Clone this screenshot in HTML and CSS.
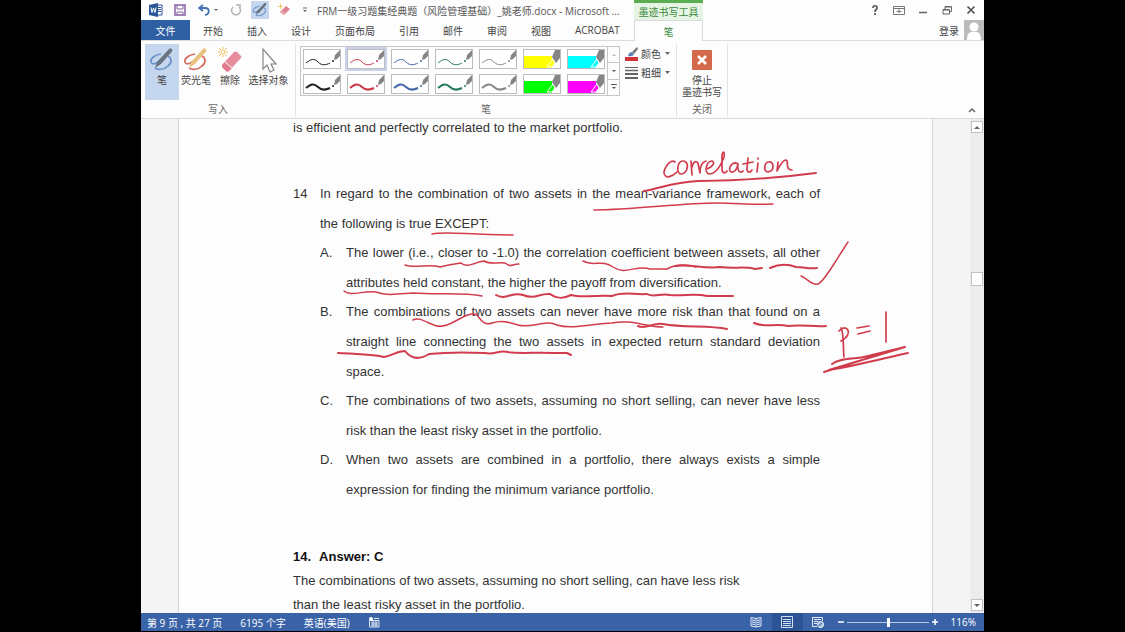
FILE: index.html
```html
<!DOCTYPE html>
<html lang="zh-CN">
<head>
<meta charset="utf-8">
<title>FRM一级习题集经典题（风险管理基础）_姚老师.docx - Microsoft Word</title>
<link rel="stylesheet" href="styles.css">
</head>
<body>
<svg class="defs" aria-hidden="true">
  <symbol id="stroke-sample" viewBox="0 0 36 18">
    <path d="M2 13C7 9 10 8 14 12C18 16 22 15 26 13" fill="none" stroke="currentColor"/>
    <circle cx="29" cy="11" r="1" fill="currentColor"/>
    <path d="M30 10L31 5L36 0V6L33 9Z" fill="#858585"/>
  </symbol>
  <symbol id="marker-sample" viewBox="0 0 36 18">
    <path d="M0 6H28V18H0Z" fill="currentColor"/>
    <path d="M23 17L29 9L31 13L28 17Z" fill="currentColor" stroke="#fff"/>
    <path d="M28 7L31 0H36V8L32 13Z" fill="#858585"/>
  </symbol>
  <symbol id="pen-loop" viewBox="0 0 26 26">
    <path d="M12 7C5 8 1 12 2 15C3 18 7 17 10 14M19 9C23 11 23 16 19 19C15 23 9 23 6 21" fill="none" stroke="currentColor" stroke-width="1.700"/>
    <path class="pen-body" d="M6 21L8 15L20 2Q23 0 23.500 4L12 17Z"/>
  </symbol>
</svg>
<main class="app">
  <header class="head">
    <div class="titlebar">
      <button class="qat" aria-label="Word"><svg width="14" height="14" viewBox="0 0 14 14"><path d="M8 2H13V12H8" fill="#fff" stroke="#2b579a"/><path d="M9 4.500H12M9 6.500H12M9 8.500H12" stroke="#2b579a"/><path d="M0 2L9 0V14L0 12Z" fill="#2b579a"/><path d="M2 4.500L3 9.500L4.500 5L6 9.500L7 4.500" fill="none" stroke="#fff"/></svg></button>
      <button class="qat" aria-label="保存"><svg width="12" height="12" viewBox="0 0 12 12"><path d="M1 1H11V11H1Z" fill="#fff" stroke="#8661a5" stroke-width="1.500"/><path d="M3 1V5H9V1M3 11V8H9V11" fill="none" stroke="#8661a5"/></svg></button>
      <button class="qat undo" aria-label="撤销"><svg width="20" height="12" viewBox="0 0 20 12"><path d="M5 1L1 4L5 7M1 4H7C12 4 12 10 7 11" fill="none" stroke="#4272b0" stroke-width="1.800"/><path d="M16 5H20L18 7Z" fill="#666"/></svg></button>
      <button class="qat" aria-label="重复"><svg width="12" height="12" viewBox="0 0 12 12"><path d="M3 3A4.500 4.500 0 1 0 9 3M6 1H10V5" fill="none" stroke="#b3b3b3" stroke-width="1.500"/></svg></button>
      <button class="qat pen selected" aria-label="笔"><svg width="16" height="16"><use href="#pen-loop"/></svg></button>
      <button class="qat" aria-label="橡皮擦"><svg width="12" height="12" viewBox="0 0 12 12"><path d="M2 8L8 2L12 5L6 11Z" fill="#e0808e"/><path d="M2 8L4 6L8 9L6 11Z" fill="#e8a2ac"/><path d="M2.500 0V5M0 2.500H5" stroke="#edc66e"/></svg></button>
      <button class="qat more" aria-label="自定义快速访问工具栏"><svg width="6" height="6" viewBox="0 0 6 6"><path d="M1 1H5" stroke="#666"/><path d="M1 3H5L3 5Z" fill="#666"/></svg></button>
      <h1 class="doc-title">FRM一级习题集经典题（风险管理基础）_姚老师.docx - Microsoft ...</h1>
    </div>
    <div class="context-title">墨迹书写工具</div>
    <div class="window-tools">
      <button aria-label="帮助"><svg width="12" height="12" viewBox="0 0 12 12"><path d="M4 4C4 1 8 1 8 4C8 6 6 5 6 8M6 9V11" fill="none" stroke="#555" stroke-width="1.700"/></svg></button>
      <button aria-label="功能区显示选项"><svg width="12" height="12" viewBox="0 0 12 12"><path d="M.5 2.500H11.500V10.500H.5ZM.5 4.500H11.500M3.500 7.500H8.500M6 5V9" fill="none" stroke="#777"/></svg></button>
      <button aria-label="最小化"><svg width="12" height="12" viewBox="0 0 12 12"><path d="M2 8.500H10" stroke="#666" stroke-width="1.500"/></svg></button>
      <button aria-label="还原"><svg width="12" height="12" viewBox="0 0 12 12"><path d="M2 5.500H8.500V10H2ZM4 5V2.500H10.500V7.500H9M4 3H10M2 6H8" fill="none" stroke="#666"/></svg></button>
      <button aria-label="关闭"><svg width="12" height="12" viewBox="0 0 12 12"><path d="M2.500 2.500L9.500 9.500M9.500 2.500L2.500 9.500" stroke="#555" stroke-width="1.700"/></svg></button>
    </div>
    <nav class="tabs">
      <button class="file">文件</button><button>开始</button><button>插入</button><button>设计</button><button>页面布局</button><button>引用</button><button>邮件</button><button>审阅</button><button>视图</button><button>ACROBAT</button>
    </nav>
    <button class="context-tab">笔</button>
    <div class="account">
      <button>登录</button>
      <svg width="20" height="20" viewBox="0 0 20 20"><path d="M0 0H20V20H0Z" fill="#bcbcbc"/><circle cx="10" cy="7" r="4.500" fill="#fff"/><path d="M3 20C3 14 5 12 8 12H12C15 12 17 14 17 20Z" fill="#fff"/></svg>
    </div>
  </header>

  <section class="ribbon" aria-label="笔">
    <div class="group write">
      <div class="tools">
        <button class="tool selected"><svg class="pen" width="26" height="26"><use href="#pen-loop"/></svg>笔</button>
        <button class="tool"><svg class="highlighter" width="26" height="26"><use href="#pen-loop"/></svg>荧光笔</button>
        <button class="tool"><svg width="26" height="26" viewBox="0 0 26 26"><path d="M5 18L17 5Q19 4 20 5L24 9Q25 10 24 11L12 24Q11 25 9 24L5 20Z" fill="#e58c9d"/><path d="M5 18L8 15L15 21L12 24Q10 25 9 24L5 20Z" fill="#df7b8d"/><path d="M8 15L15 21" stroke="#fff"/><circle cx="6" cy="5" r="2" fill="none" stroke="#edc45c"/><path d="M6 0V2M6 8V10M1 5H3M9 5H11M2 1L4 3M8 7L10 9M10 1L8 3M4 7L2 9" stroke="#edc45c"/></svg>擦除</button>
        <button class="tool wide"><svg width="26" height="26" viewBox="0 0 26 26"><path d="M7 2V22L11 18L14 25L18 23L15 17H20Z" fill="#fff" stroke="#858585" stroke-width="1.200"/></svg>选择对象</button>
      </div>
      <div class="group-label">写入</div>
    </div>
    <div class="group pens">
      <div class="tools">
        <div class="gallery">
          <div class="swatches">
            <button class="ink black" aria-label="黑色细笔"><svg><use href="#stroke-sample"/></svg></button>
            <button class="ink red chosen" aria-label="红色细笔"><svg><use href="#stroke-sample"/></svg></button>
            <button class="ink blue" aria-label="蓝色细笔"><svg><use href="#stroke-sample"/></svg></button>
            <button class="ink teal" aria-label="绿色细笔"><svg><use href="#stroke-sample"/></svg></button>
            <button class="ink gray" aria-label="灰色细笔"><svg><use href="#stroke-sample"/></svg></button>
            <button class="ink yellow" aria-label="黄色荧光笔"><svg><use href="#marker-sample"/></svg></button>
            <button class="ink cyan" aria-label="青色荧光笔"><svg><use href="#marker-sample"/></svg></button>
            <button class="ink black bold" aria-label="黑色粗笔"><svg><use href="#stroke-sample"/></svg></button>
            <button class="ink red bold" aria-label="红色粗笔"><svg><use href="#stroke-sample"/></svg></button>
            <button class="ink blue bold" aria-label="蓝色粗笔"><svg><use href="#stroke-sample"/></svg></button>
            <button class="ink teal bold" aria-label="绿色粗笔"><svg><use href="#stroke-sample"/></svg></button>
            <button class="ink gray bold" aria-label="灰色粗笔"><svg><use href="#stroke-sample"/></svg></button>
            <button class="ink green" aria-label="绿色荧光笔"><svg><use href="#marker-sample"/></svg></button>
            <button class="ink magenta" aria-label="洋红荧光笔"><svg><use href="#marker-sample"/></svg></button>
          </div>
          <div class="gallery-nav">
            <button aria-label="上一行"><svg width="6" height="6" viewBox="0 0 6 6"><path d="M1 4H5L3 2Z" fill="#bbb"/></svg></button>
            <button aria-label="下一行"><svg width="6" height="6" viewBox="0 0 6 6"><path d="M1 2H5L3 4Z" fill="#555"/></svg></button>
            <button aria-label="其他"><svg width="6" height="6" viewBox="0 0 6 6"><path d="M0 .5H6" stroke="#555"/><path d="M1 3H5L3 5Z" fill="#555"/></svg></button>
          </div>
        </div>
        <div class="options">
          <button><svg width="14" height="14" viewBox="0 0 14 14"><path d="M0 10H13V14H0Z" fill="#d13438"/><path d="M3 9Q4 5 7 5L9 7Q8 10 3 9Z" fill="#5b7fbd"/><path d="M7 5L12 0L13 2L9 7Z" fill="#777"/></svg>颜色<span class="caret"></span></button>
          <button><svg width="14" height="14" viewBox="0 0 14 14"><path d="M0 1.500H13" stroke="#666"/><path d="M0 4.500H13" stroke="#666" stroke-width="1.500"/><path d="M0 8H13M0 12H13" stroke="#666" stroke-width="2"/></svg>粗细<span class="caret"></span></button>
        </div>
      </div>
      <div class="group-label">笔</div>
    </div>
    <div class="group stop">
      <div class="tools">
        <button class="tool"><svg width="20" height="26" viewBox="0 0 20 26"><rect y="3" width="20" height="20" rx="1" fill="#d4694c"/><path d="M6 9L14 17M14 9L6 17" stroke="#fff" stroke-width="2.500"/></svg>停止<br>墨迹书写</button>
      </div>
      <div class="group-label">关闭</div>
    </div>
    <button class="collapse" aria-label="折叠功能区"><svg width="8" height="6" viewBox="0 0 8 6"><path d="M1 5L4 2L7 5" fill="none" stroke="#666" stroke-width="1.500"/></svg></button>
  </section>

  <section class="workspace">
    <div class="canvas">
      <article class="page">
        <p class="lead">is efficient and perfectly correlated to the market portfolio.</p>
        <div class="question">
          <span>14</span>
          <p><span class="full">In regard to the combination of two assets in the mean-variance framework, each of</span><span class="line">the following is true EXCEPT:</span></p>
        </div>
        <div class="choice"><span>A.</span>
          <p><span class="full">The lower (i.e., closer to -1.0) the correlation coefficient between assets, all other</span><span class="line">attributes held constant, the higher the payoff from diversification.</span></p></div>
        <div class="choice"><span>B.</span>
          <p><span class="full">The combinations of two assets can never have more risk than that found on a</span><span class="full">straight line connecting the two assets in expected return standard deviation</span><span class="line">space.</span></p></div>
        <div class="choice"><span>C.</span>
          <p><span class="full">The combinations of two assets, assuming no short selling, can never have less</span><span class="line">risk than the least risky asset in the portfolio.</span></p></div>
        <div class="choice"><span>D.</span>
          <p><span class="full">When two assets are combined in a portfolio, there always exists a simple</span><span class="line">expression for finding the minimum variance portfolio.</span></p></div>
        <div class="answer">
          <h2><span>14.</span><span>Answer: C</span></h2>
          <p>The combinations of two assets, assuming no short selling, can have less risk<br>than the least risky asset in the portfolio.</p>
        </div>
        <svg class="annotations" width="753" height="495" viewBox="179 118 753 495" role="img" aria-label="correlation, p = 1">
          <g class="hand">
            <path d="M675 161C670 157 664 168 664 172C665 179 673 175 677 171"/>
            <path d="M683 160C677 160 676 173 681 173C688 173 690 160 683 160"/>
            <path d="M691 160L692 174M692 166C693 161 696 159 698 162L700 172C700 165 702 161 706 160"/>
            <path d="M706 168C712 167 716 161 712 160C706 160 704 172 709 173C716 173 721 164 724 156C725 150 723 150 722 154L722 168C722 172 725 173 727 170"/>
            <path d="M738 163C732 159 727 169 731 171C735 172 738 166 738 163C737 169 739 173 743 170"/>
            <path d="M748 157L747 168C747 172 750 172 752 169M743 163L753 161M758 162L757 171M758 157V158"/>
            <path d="M769 161C764 161 763 171 768 171C775 170 774 160 769 161M778 161L777 170C780 163 785 157 787 160C788 163 786 169 792 169"/>
            <path d="M841 327C844 332 843 348 844 356M839 330C846 321 855 333 841 340M857 327L869 325M858 333L870 330M886 311V341"/>
          </g>
          <g class="thin">
            <path d="M594 209C635 209 680 202 717 202C738 202 752 204 773 203"/>
            <path d="M432 233C448 230 467 234 513 234"/>
            <path d="M405 264C415 268 430 262 440 266C448 264 454 263 461 262C467 268 478 260 484 260C491 264 497 261 505 262C512 267 511 263 519 263"/>
            <path d="M344 290C351 296 364 289 376 291C387 295 398 293 413 292C438 294 463 291 482 295"/>
            <path d="M413 319C421 314 434 328 442 325C453 325 467 309 477 314C481 319 484 325 492 322C502 319 508 321 518 324C532 328 545 318 557 324C572 329 596 322 612 322C631 318 646 326 663 326"/>
            <path d="M583 260C594 266 602 258 613 266C626 275 636 263 650 268H667C674 264 682 262 696 266"/>
            <path d="M801 275C807 277 812 285 818 283C824 281 836 259 848 241"/>
          </g>
          <g class="thick">
            <path d="M644 190C659 188 672 181 698 180C739 180 777 177 816 172"/>
            <path d="M675 265C691 263 704 268 720 266C735 268 744 265 755 268L762 267M770 267C779 263 788 263 796 266C805 266 808 268 817 267"/>
            <path d="M496 294C506 300 512 290 523 294C535 299 539 292 550 293C557 298 563 298 571 294C582 297 590 294 612 295C624 290 633 294 647 293C654 297 660 292 670 294C684 295 696 292 707 295H733"/>
            <path d="M638 325C646 329 653 321 663 323C685 327 708 324 727 328M754 322C764 327 776 322 788 325C800 323 813 326 826 325"/>
            <path d="M338 352C356 353 371 353 384 356C393 354 398 350 405 350C412 359 421 358 429 353C447 351 463 351 485 352C495 354 498 349 508 351C521 353 535 351 553 352H567L571 354"/>
            <path d="M832 363C841 356 854 359 868 355L905 346L829 369C860 364 889 356 908 352M824 371L881 353"/>
          </g>
        </svg>
      </article>
    </div>
    <div class="scrollbar">
      <button aria-label="向上滚动"><svg width="6" height="6" viewBox="0 0 6 6"><path d="M0 5H6L3 2Z" fill="#666"/></svg></button>
      <span class="thumb"></span>
      <button aria-label="向下滚动"><svg width="6" height="6" viewBox="0 0 6 6"><path d="M0 2H6L3 5Z" fill="#666"/></svg></button>
    </div>
  </section>

  <footer class="status">
    <span>第 9 页 , 共 27 页</span><span>6195 个字</span><span>英语(美国)</span>
    <svg class="macro" width="12" height="12" viewBox="0 0 12 12"><path d="M1.500 4.500H11V11H1.500ZM6 2.500H11M3 7H10M3 9H10M5 5V11M8 5V11" fill="none" stroke="#dce6f4"/><circle cx="3" cy="3" r="2" fill="#fff"/></svg>
    <div class="views">
      <button aria-label="阅读视图"><svg width="12" height="12" viewBox="0 0 12 12"><path d="M6 2.500L1 1.500V10L6 11L11 10V1.500L6 2.500V11M2 4L5 4.500M2 6L5 6.500M2 8L5 8.500M7 4.500L10 4M7 6.500L10 6M7 8.500L10 8" fill="none" stroke="#e5edf8"/></svg></button>
      <button class="current" aria-label="页面视图"><svg width="12" height="12" viewBox="0 0 12 12"><path d="M.5 .5H11.500V11.500H.5ZM2 3.500H10M2 5.500H10M2 7.500H10M2 9.500H10" fill="none" stroke="#d3e0f2"/></svg></button>
      <button aria-label="Web 版式视图"><svg width="12" height="12" viewBox="0 0 12 12"><path d="M5 10.500H.5V1.500H10.500V5M2 3.500H9M2 5.500H6M2 7.500H5" fill="none" stroke="#e5edf8"/><circle cx="8.500" cy="8.500" r="3" fill="#a8c0e2" stroke="#fff"/><path d="M6 10L10 7" stroke="#3a62a7"/></svg></button>
    </div>
    <div class="zoom">
      <button aria-label="缩小"><svg width="8" height="8" viewBox="0 0 8 8"><path d="M1 4H7" stroke="#fff" stroke-width="1.500"/></svg></button>
      <input type="range" min="0" max="100" value="51" aria-label="缩放">
      <button aria-label="放大"><svg width="8" height="8" viewBox="0 0 8 8"><path d="M1 4H7M4 1V7" stroke="#fff" stroke-width="1.500"/></svg></button>
    </div>
    <button class="percent">116%</button>
  </footer>
</main>
</body>
</html>
```
FILE: styles.css
```css
* { box-sizing: border-box; }
body { margin: 0; background: #000; font-family: "Open Sans", "Noto Sans CJK SC", sans-serif; font-size: 10px; color: #444; }
button { display: flex; align-items: center; justify-content: center; margin: 0; padding: 0; border: 0; background: none; font: inherit; color: inherit; white-space: nowrap; }
svg { display: block; flex: none; }
p, h1, h2 { margin: 0; font-size: inherit; font-weight: normal; }
.defs { position: absolute; width: 0; height: 0; }
.app { display: flex; flex-direction: column; height: calc(100vh - 1px); margin: 0 141px; background: #fdfdfd; }

.head { display: grid; grid-template-columns: 493px 69px 1fr; grid-template-rows: 20px 21px; }
.titlebar { display: flex; align-items: center; padding-left: 6px; overflow: hidden; }
.qat { width: 18px; height: 18px; margin-right: 6px; flex: none; }
.qat.undo { width: 26px; }
.qat.more { width: 12px; }
.qat.selected { background: #c5d6ef; }
.doc-title { white-space: nowrap; font-size: 10px; color: #555; }
.context-title { display: flex; align-items: center; justify-content: center; border-top: 3px solid #5aad50; background: #e6f4e3; color: #3a8a3e; }
.window-tools { display: flex; justify-content: flex-end; align-items: center; gap: 12px; padding-right: 7px; }
.tabs { display: flex; border-bottom: 1px solid #d9dbdd; }
.tabs button { padding: 0 12px; }
.tabs .file { width: 49px; margin-right: 1px; background: #2f5fa3; color: #fff; }
.context-tab { border: 1px solid #d9dbdd; border-bottom: 0; color: #3a8a3e; }
.account { display: flex; justify-content: flex-end; gap: 5px; border-bottom: 1px solid #d9dbdd; }

.ribbon { display: flex; flex: none; height: 78px; padding: 3px 0 1px; border-bottom: 1px solid #d9dbdd; }
.group { display: flex; flex-direction: column; flex: none; border-right: 1px solid #e2e3e4; }
.write { width: 155px; }
.pens { width: 381px; }
.stop { width: 51px; }
.tools { display: flex; flex: 1; }
.group-label { height: 16px; line-height: 16px; text-align: center; color: #666; }
.write .tools { padding-left: 4px; }
.tool { flex-direction: column; justify-content: flex-start; width: 34px; height: 56px; padding-top: 3px; line-height: 12px; }
.tool svg { margin-bottom: 1px; }
.tool.wide { width: 43px; }
.tool.selected { background: #c5d6ef; }
.stop .tool { width: 50px; }
.pen { color: #6c93c9; --body: #68747f; }
.highlighter { color: #d46a5e; --body: #e9c27e; }
.pen-body { fill: var(--body); }
.gallery { display: flex; height: 50px; margin: 2px 0 0 4px; border: 1px solid #c6c6c6; }
.swatches { display: grid; grid-template-columns: repeat(7, 38px); grid-template-rows: 20px 20px; gap: 5px 6px; padding: 2px; }
.ink { border: 1px solid #bcbcbc; background: #fff; }
.ink svg { width: 36px; height: 18px; }
.ink.chosen { outline: 2px solid #c9d3ec; }
.ink.bold { stroke-width: 2; }
.black { color: #222; }
.red { color: #cc3a4b; }
.blue { color: #4468a8; }
.teal { color: #277a5b; }
.gray { color: #888; }
.yellow { color: #ff0; }
.cyan { color: #0ff; }
.green { color: #0f0; }
.magenta { color: #f0f; }
.gallery-nav { display: grid; width: 12px; border-left: 1px solid #c6c6c6; }
.gallery-nav button + button { border-top: 1px solid #c6c6c6; }
.options { display: flex; flex-direction: column; padding-left: 5px; }
.options button { gap: 2px; height: 19px; }
.caret { width: 5px; height: 3px; margin-left: 2px; background: #666; clip-path: polygon(0 0, 100% 0, 50% 100%); }
.collapse { align-self: flex-end; width: 24px; height: 14px; margin-left: auto; }

.workspace { display: flex; flex: 1; min-height: 0; background: #f4f4f4; }
.canvas { flex: 1; overflow: hidden; }
.page { position: relative; max-width: 755px; min-height: 100%; margin: 0 auto; padding: 0 112px 0 114px; border: solid #d4d4d4; border-width: 0 1px; background: #fdfdfd; font-family: "Liberation Sans", Arial, sans-serif; font-size: 13px; line-height: 30px; color: #333; }
.lead { padding-bottom: 42px; line-height: 18px; white-space: nowrap; }
.question, .choice { display: grid; grid-template-columns: 27px 1fr; margin-bottom: -1px; }
.choice { grid-template-columns: 26px 1fr; padding-left: 27px; }
.full, .line { display: block; white-space: nowrap; }
.full { text-align-last: justify; }
.answer { padding-top: 41px; line-height: 24px; white-space: nowrap; }
.answer h2 { display: flex; gap: 8px; font-weight: bold; color: #111; }
.annotations { position: absolute; top: 0; left: 0; fill: none; stroke: #d13c4d; stroke-linecap: round; stroke-linejoin: round; }
.hand { stroke-width: 1.7px; }
.thin { stroke-width: 1.5px; }
.thick { stroke-width: 2px; }
.scrollbar { display: flex; flex-direction: column; align-items: center; width: 14px; padding: 2px 0; background: #ececec; }
.scrollbar button { width: 12px; height: 12px; border: 1px solid #c2c2c2; background: #fff; }
.scrollbar .thumb { width: 12px; height: 14px; margin: 139px 0 auto; border: 1px solid #c2c2c2; background: #fff; }

.status { display: flex; flex: none; align-items: center; gap: 18px; height: 18px; padding: 0 8px 0 6px; background: #3a62a7; color: #fff; white-space: nowrap; }
.views { display: flex; margin-left: auto; }
.views button { width: 31px; height: 18px; }
.views .current { background: #2c5394; }
.zoom { display: flex; align-items: center; gap: 2px; margin: 0 -6px 0 -15px; }
.zoom input { width: 82px; height: 12px; margin: 0; appearance: none; background: linear-gradient(#b8cae5, #b8cae5) center / 100% 1px no-repeat; }
.zoom input::-webkit-slider-thumb { appearance: none; width: 3px; height: 9px; background: #fff; }
```
